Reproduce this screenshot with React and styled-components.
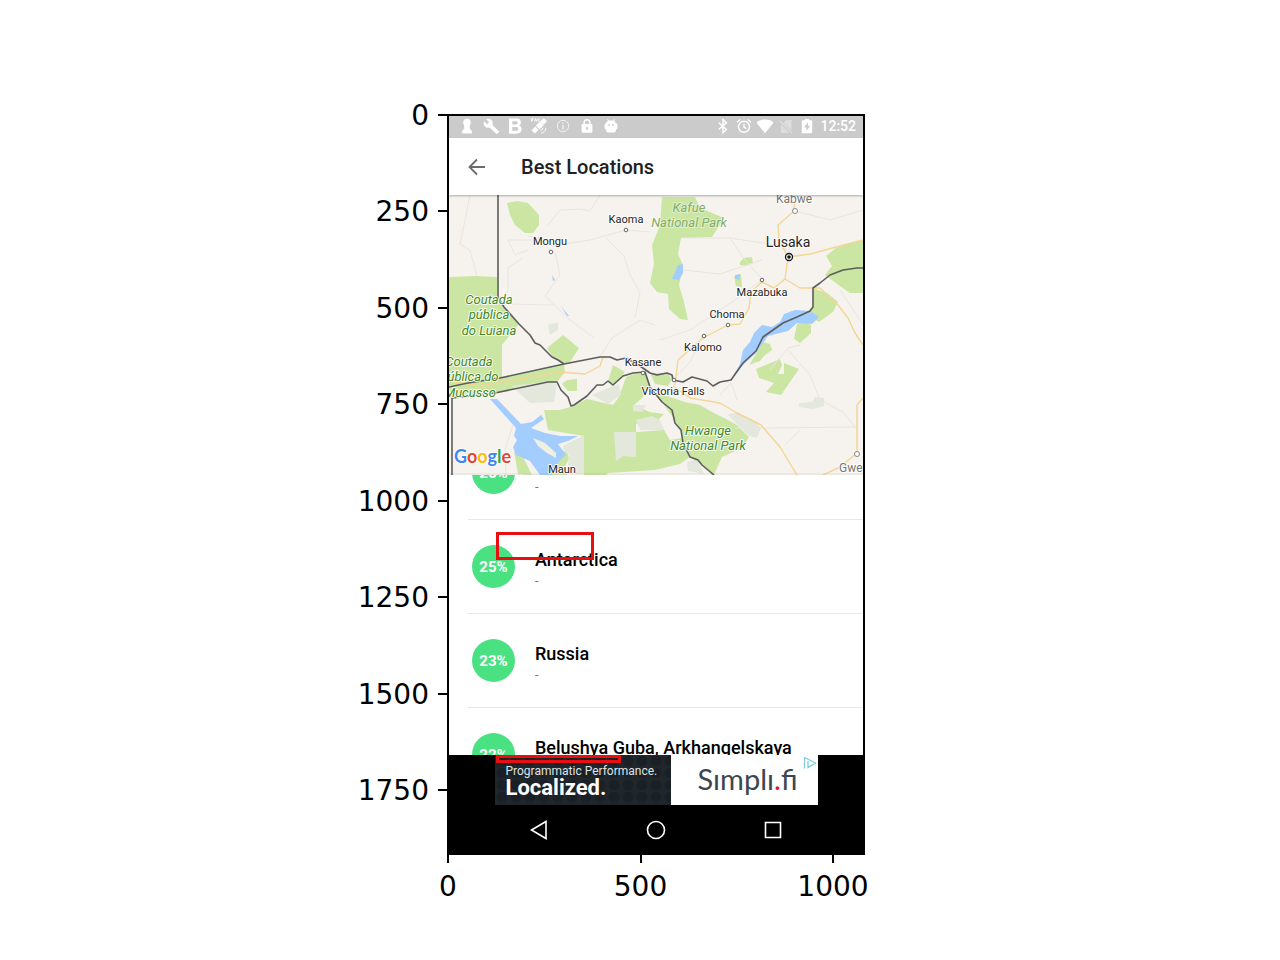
import React from "react";
import styled, { createGlobalStyle } from "styled-components";

const GlobalStyle = createGlobalStyle`
  * { box-sizing: border-box; }
  body { margin: 0; background: #fff; font-family: Roboto, sans-serif; }
  ul { margin: 0; padding: 0; list-style: none; }
  h1, h2, p { margin: 0; }
  svg { display: block; }
`;

/* ---------- chart frame ---------- */
const Figure = styled.main`
  display: grid;
  grid-template-columns: 447fr 418fr 415fr;
  padding: 114px 0 50px;
  font-family: "DejaVu Sans", sans-serif;
`;
const YAxis = styled.div`
  display: flex;
  flex-direction: column;
  justify-content: space-between;
  margin-top: -9px;
  padding-bottom: 55px;
`;
const YTick = styled.div`
  display: flex;
  justify-content: flex-end;
  align-items: flex-start;
  gap: 9px;
  height: 20px;
  font-size: 28px;
  line-height: 22px;
  &::after { content: ""; width: 9px; height: 2px; margin-top: 9px; background: #000; }
`;
const XAxis = styled.div`
  grid-column: 2;
  display: flex;
  justify-content: space-between;
  margin: 0 -5px 0 -36px;
`;
const XTick = styled.div`
  display: flex;
  flex-direction: column;
  align-items: center;
  flex: 0 0 74px;
  gap: 8px;
  font-size: 28px;
  line-height: 32px;
  &::before { content: ""; width: 2px; height: 8px; background: #000; }
`;
const Plot = styled.section`
  position: relative;
  border: 2px solid #000;
  font-family: Roboto, sans-serif;
`;
const Mark = styled.span`
  position: absolute;
  left: 47px;
  top: ${(p) => p.$top}px;
  width: ${(p) => p.$w}px;
  height: ${(p) => p.$h}px;
  border: 3px solid #e90f10;
`;

/* ---------- phone screen ---------- */
const StatusBar = styled.div`
  display: flex;
  justify-content: space-between;
  align-items: center;
  height: 22px;
  padding: 0 7px 2px 10px;
  background: #cbcbcb;
  color: #fff;
`;
const IconRow = styled.div`
  display: flex;
  align-items: center;
  gap: ${(p) => p.$gap}px;
`;
const Clock = styled.time`
  font-size: 14px;
  font-weight: 500;
  line-height: 20px;
`;
const AppBar = styled.header`
  position: relative;
  display: flex;
  align-items: center;
  gap: 32px;
  height: 57px;
  padding-left: 16px;
  background: #fff;
  box-shadow: 0 1px 2px rgba(0, 0, 0, 0.3);
`;
const IconButton = styled.button`
  display: grid;
  place-items: center;
  width: 24px;
  height: 24px;
  padding: 0;
  border: 0;
  background: none;
  color: ${(p) => p.$color};
`;
const Title = styled.h1`
  font-size: 20px;
  font-weight: 500;
  line-height: 26px;
  color: #212121;
`;
const MapSvg = styled.svg`
  width: 100%;
  height: auto;
  background: #f6f3ee;
  font-family: Roboto, sans-serif;
`;
const List = styled.ul`
  height: 280px;
  overflow: hidden;
  background: #fff;
  & > li:first-child { margin-top: -49px; }
`;
const Row = styled.li`
  display: flex;
  align-items: center;
  gap: 20px;
  height: 94px;
  margin-left: 19px;
  padding-left: 4px;
  border-bottom: 1px solid #e8e8e8;
`;
const Badge = styled.span`
  display: grid;
  place-items: center;
  flex: none;
  width: 43px;
  height: 43px;
  border-radius: 50%;
  background: #4ae183;
  color: #fff;
  font-size: 15px;
  font-weight: 700;
`;
const RowText = styled.div`
  display: grid;
  gap: 1px;
  padding-top: 4px;
`;
const Place = styled.h2`
  min-height: 24px;
  font-size: 18px;
  font-weight: 500;
  line-height: 24px;
  color: #000;
  white-space: nowrap;
`;
const Detail = styled.p`
  font-size: 13px;
  line-height: 16px;
  color: #777;
`;
const AdStrip = styled.div`
  display: flex;
  justify-content: center;
  height: 50px;
  background: #000;
`;
const AdLink = styled.a`
  display: flex;
  width: 323px;
  color: inherit;
  text-decoration: none;
`;
const AdCopy = styled.span`
  flex: 0 0 176px;
  padding: 9px 0 0 11px;
  background-color: #1b2227;
  background-image: radial-gradient(circle, #1a2025 55%, #1f272c 60%);
  background-size: 14px 12px;
  color: #fff;
  white-space: nowrap;
`;
const AdSmall = styled.span`
  display: block;
  font: 400 12px/14px Roboto, sans-serif;
  color: #dfe3e5;
`;
const AdLarge = styled.strong`
  display: block;
  font: 700 22px/20px Roboto, sans-serif;
`;
const AdLogo = styled.span`
  position: relative;
  flex: 1;
  padding-left: 27px;
  background: #fff;
  color: #3c474f;
  font: 400 29px/48px Lato, sans-serif;
  white-space: nowrap;
`;
const RedDot = styled.span`
  color: #e0142c;
`;
const AdChoice = styled.svg`
  position: absolute;
  top: 1px;
  right: 1px;
`;
const NavBar = styled.nav`
  display: flex;
  justify-content: center;
  align-items: center;
  gap: 93px;
  height: 48px;
  padding-top: 2px;
  background: #000;
`;

/* ---------- icons ---------- */
const Icon = ({ children, size = 16 }) => (
  <svg width={size} height={size} viewBox="0 0 16 16" fill="currentColor" aria-hidden="true">
    {children}
  </svg>
);
const line = { fill: "none", stroke: "currentColor", strokeWidth: 1.4 };

const leftIcons = [
  <path d="M8 .5a4 4 0 0 1 3 6.500L10.600 10.500 12.800 12.800v2.700H3.200v-2.700l2.200-2.300L5 7A4 4 0 0 1 8 .5z" />,
  <path d="M15.800 13.300 9.400 6.900c.6-1.600.3-3.500-1-4.800C7 .7 4.900.5 3.200 1.200L6.100 4.200 4.200 6.200 1.100 3.200C.3 4.900.6 7 2 8.400c1.300 1.300 3.200 1.600 4.800 1l6.400 6.400c.3.300.7.3 1 0l1.600-1.600c.3-.2.3-.7 0-.9z" />,
  <path fillRule="evenodd" d="M2 .5h7.700c2.900 0 4.200 1.700 4.200 3.900 0 1.500-.7 2.600-2 3.200 1.700.5 2.700 1.900 2.700 3.700 0 2.700-2 4.400-4.900 4.400H2zM5.300 3.200v3.200h3.600c1.200 0 1.800-.6 1.800-1.600s-.6-1.600-1.800-1.600zM5.300 9v3.800h4c1.200 0 1.900-.7 1.900-1.900S10.500 9 9.300 9z" />,
  <g>
    <path d="M9 3.500 12.500 0 16 3.200l-3.500 3.600zM4.700 7.500 9 3.700l3.700 3.800-4.100 4.100zM.5 12.400 4.300 8.500l3.200 3.300L3.800 15.500z" />
    <path d="M.7 3.500V.7h2M.7 2h1.500M3.700 3.500 4.700.7l1 2.800M8.600 1a1.200 1.200 0 1 0 0 2.200M9.500 12.500a4 4 0 0 0 2.500-2.500M10 15.200c2.600-.3 4.600-2.400 5-5" {...line} strokeWidth="1" />
  </g>,
  <g opacity="0.75">
    <circle cx="8" cy="8" r="5.700" {...line} strokeWidth="1" />
    <path d="M7.300 4.500h1.400v1.300H7.300zM7.300 7h1.400v4.500H7.300z" />
  </g>,
  <path fillRule="evenodd" d="M12.500 6h-.9V4.700a3.600 3.600 0 0 0-7.200 0V6h-.9c-.5 0-.9.400-.9.900v6.900c0 .5.400.9.900.9h9c.5 0 .9-.4.900-.9V6.900c0-.5-.4-.9-.9-.9zM8 11.700a1.300 1.300 0 1 1 0-2.600 1.300 1.300 0 0 1 0 2.600zM10.200 6H5.800V4.700a2.200 2.200 0 0 1 4.400 0z" />,
  <path fillRule="evenodd" d="m4.800 1 1.200 1.600h4L11.200 1l.6.500-.7 1.500c1.100.5 1.700 1.400 1.900 2.600.9-.1 1.400.3 1.400 1.200v3.200c0 .9-.5 1.300-1.400 1.200v.5c0 1.700-.8 2.700-2.300 2.700H5.300C3.800 14.400 3 13.400 3 11.700v-.5c-.9.100-1.400-.3-1.400-1.200V6.800c0-.9.500-1.300 1.400-1.200.2-1.200.8-2.100 1.900-2.600l-.7-1.500zM6 6a.9.900 0 1 0 0 1.800A.9.900 0 0 0 6 6zm4 0a.9.900 0 1 0 0 1.800A.9.900 0 0 0 10 6z" />,
];

const rightIcons = [
  <path d="m3.800 4.800 7.600 6.700L8 14.700V1.500l3.400 3.200-7.600 6.700" {...line} />,
  <g {...line}>
    <circle cx="8" cy="8.800" r="5.500" />
    <path d="M8 5.800v3.300l2.400 1.500M1 4.200l3.200-2.700M15 4.200l-3.200-2.700" />
  </g>,
  <path d="M-.8 4.300C4.500.4 11.500.4 16.800 4.300L8 15.300z" />,
  <g opacity="0.35">
    <path d="M13.500 2v10.500L5.500 4.800 8 2zM3 6.500l8.500 8.500H3z" />
    <path d="m1.500 2.500 12.500 12.500" {...line} />
  </g>,
  <path fillRule="evenodd" d="M6 1h4v1.300h2.400c.5 0 .8.300.8.800v11.400c0 .5-.3.800-.8.800H3.600c-.5 0-.8-.3-.8-.8V3.100c0-.5.300-.8.800-.8H6zM9 4.200 5 9.500h2.400v3.800L11 8H9z" />,
];

/* ---------- map ---------- */
const GREEN = "#cbe6a3";
const PALE = "#e4e8dc";
const WATER = "#a3ccff";

const greens = [
  "M507 203 517 201 528 203 539 215 539 225 533 233 525 233 515 225 510 215z",
  "M449 277 476 276 497 277 497 297 504 307 519 324 502 345 502 378 540 369 564 364 565 372 557 382 495 393 449 398z",
  "M547 348 563 335 579 348 570 362 564 364 553 357z",
  "M562 384 567 380 577 379 577 391 568 391z",
  "M544 410 560 410 573 406 587 399 613 405 619 397 626 377 634 374 646 373 650 385 642 398 634 405 650 412 664 414 658 420 636 424 636 432 664 430 670 440 681 438 683 443 690 457 680 464 655 470 608 473 606 475 584 475 584 436 548 430z",
  "M613 365 625 372 618 381 612 386 608 381z",
  "M650 373 667 373 672 379 668 386 655 384z",
  "M652 392 670 397 685 402 700 405 712 412 728 420 737 425 749 437 742 448 722 457 714 475 698 461 690 457 683 443 681 430 675 420 662 402z",
  "M662 197 695 197 700 208 724 218 712 237 681 238 678 254 683 265 679 285 684 302 688 320 680 319 669 309 668 294 657 292 650 283 654 264 652 245 660 225z",
  "M740 262 744 258 752 257 753 263 746 266 740 265z",
  "M734 277 741 274 742 287 736 286z",
  "M826 256 836 248 857 241 863 240 863 293 850 293 840 286 825 275 832 266z",
  "M813 288 827 293 838 302 833 312 819 322 811 317 809 310 813 306z",
  "M797 324 804 321 811 325 811 333 800 343 794 339z",
  "M756 354 763 342 770 344 772 350 764 356 760 361 749 365z",
  "M756 369 780 359 782 365 778 374 784 374 784 363 799 369 790 382 781 395 766 392 774 383 759 378z",
  "M514 451 520 451 532 475 518 474z",
  "M552 475 557 461 560 451 567 451 569 459 564 468 567 475z",
];
const pales = [
  "M512 386 545 382 557 384 554 402 530 403z",
  "M563 446 584 435 584 474 567 474 569 455 564 451z",
  "M614 432 636 432 636 457 623 456 616 461z",
  "M592 395 608 388 619 384 621 395 608 404z",
  "M633 405 646 405 642 412 633 411z",
  "M636 420 652 416 660 420 664 430 640 430z",
  "M727 414 737 413 750 418 761 428 757 438 749 436z",
  "M799 403 812 402 815 397 824 398 824 406 812 409 799 407z",
  "M548 325 558 322 558 330 550 335z",
  "M687 462 697 459 704 474 688 471z",
];
const waters = [
  "M490 399 497 399 521 424 532 422 541 415 544 419 531 428 545 433 560 436 578 436 568 441 558 444 566 455 560 460 552 475 540 475 530 461 516 455 513 447 517 440 514 436 516 428z",
  "M731 380 740 364 743 350 750 342 754 333 762 325 772 327 780 322 784 314 795 310 810 311 819 317 812 324 797 323 788 331 768 336 756 353 742 366z",
  "M672 279 678 265 683 264 683 273 679 280z",
  "M735 275 740 274 739 280 735 278z",
  "M552 275 555 280 553 281z",
  "M561 306 569 316 567 316z",
];
const minorRoads = [
  "M470 195 463 230 460 244 470 250 477 276",
  "M551 252 540 238 528 236M551 246 590 240 626 230 650 232",
  "M606 238 624 256 630 275 640 292 635 318",
  "M555 252 560 275 545 296 570 320 594 338",
  "M552 240 508 240 515 255 528 250M523 258 508 268 508 290 504 304 553 305",
  "M548 225 560 210 580 209 590 211 600 195M683 238 730 238 770 244 788 250",
  "M684 270 720 274 762 260M730 238 745 260 762 279",
  "M762 280 735 300 690 330 660 340",
  "M703 335 690 362 673 380M863 210 830 220 795 211",
  "M788 350 810 375 820 400 843 412 856 428",
  "M735 428 770 428 855 427M785 445 800 430M863 325 840 290",
  "M737 400 731 383 720 395M800 345 788 348 770 370",
  "M513 425 505 450 506 475M600 357 612 338 640 320 655 325",
];
const majorRoads = [
  "M796 195 793 212 778 225 779 240 788 257 785 279 774 288 762 282 751 292 749 308 740 324 728 325 703 338 678 360 675 385",
  "M785 279 800 288 820 288 838 305 848 318 855 333 863 345",
  "M788 257 810 254 840 246 863 240",
  "M449 381 480 386 560 372 585 374 600 366 603 357",
  "M673 386 690 398 720 403 737 413 761 425 780 447 797 475",
  "M863 398 857 405 857 453 840 467 823 475",
];
const borders = [
  "M498 195V297L504 307 519 324 530 335 535 343 540 345 548 353 552 357 558 360 564 364",
  "M449 387 468 383 500 378 564 364 600 357 610 357 617 360 626 358 640 366 650 373 657 375 667 373 672 375 673 380 683 382 692 377 707 381 713 386 720 382 731 380 743 363 756 351 763 337 773 330 783 323 797 317 810 311 813 307 813 288 820 283 830 275 843 270 857 268 863 268",
  "M452 475V398L495 393 548 382 557 382 561 390 568 397 571 406 574 405 587 396 597 385 603 385 608 381 613 385 623 376 633 373 645 372 650 387 662 402 672 410 675 423 681 430 683 443 690 457 698 460 702 465 714 475",
];
const towns = [
  ["Kaoma", 626, 223, 626, 230],
  ["Mongu", 550, 245, 551, 252],
  ["Mazabuka", 762, 296, 762, 280],
  ["Choma", 727, 318, 728, 325],
  ["Kalomo", 703, 351, 704, 336],
  ["Kasane", 643, 366, 643, 373],
  ["Victoria Falls", 673, 395, 674, 380],
  ["Maun", 562, 473, 562, 478],
];
const parks = [
  ["Coutada", 489, 304], ["pública", 489, 319], ["do Luiana", 489, 335],
  ["Coutada", 469, 366], ["ública do", 473, 381], ["Mucusso", 470, 397],
  ["Hwange", 708, 435], ["National Park", 708, 450],
];
const halo = { stroke: "#fff", strokeOpacity: 0.85, strokeWidth: 2, paintOrder: "stroke", strokeLinejoin: "round" };
const shapes = (list, props) => list.map((d) => <path key={d} d={d} {...props} />);

const MapView = () => (
  <MapSvg viewBox="449 195 414 280" role="img" aria-label="Map">
    <g>{shapes(greens, { fill: GREEN })}</g>
    <g>{shapes(pales, { fill: PALE })}</g>
    <g>{shapes(waters, { fill: WATER })}</g>
    <path d="M533 438 545 443 556 453 556 458 547 453 538 446z" fill="#eef0e2" />
    <g fill="none" strokeLinejoin="round">
      {shapes(minorRoads, { stroke: "#ebe3df", strokeWidth: 1 })}
      {shapes(majorRoads, { stroke: "#f3d596", strokeWidth: 1.4 })}
      {shapes(borders, { stroke: "#5d5d5d", strokeWidth: 1.6 })}
    </g>
    <g fontSize="11" textAnchor="middle" fill="#222">
      {towns.map(([name, x, y, cx, cy]) => (
        <g key={name}>
          <circle cx={cx} cy={cy} r="1.800" fill="#fff" stroke="#666" />
          <text x={x} y={y} {...halo}>{name}</text>
        </g>
      ))}
    </g>
    <g fontSize="12" textAnchor="middle" fill="#777">
      <circle cx="795" cy="211" r="2.500" fill="#fff" stroke="#888" />
      <text x="794" y="203" {...halo}>Kabwe</text>
      <circle cx="857" cy="454" r="2.500" fill="#fff" stroke="#888" />
      <text x="839" y="472" textAnchor="start" {...halo}>Gwe</text>
    </g>
    <circle cx="789" cy="257" r="3.500" fill="#fff" stroke="#111" strokeWidth="1.300" />
    <circle cx="789" cy="257" r="1.800" fill="#111" />
    <text x="788" y="247" fontSize="14" textAnchor="middle" fill="#222" {...halo}>Lusaka</text>
    <g fontSize="13" fontStyle="italic" textAnchor="middle">
      {parks.map(([name, x, y]) => (
        <text key={name + y} x={x} y={y} fill="#44881f" {...halo}>{name}</text>
      ))}
      <g fill="#84ae68" stroke="#fff" strokeOpacity="0.4" strokeWidth="2" paintOrder="stroke">
        <text x="689" y="212">Kafue</text>
        <text x="689" y="227">National Park</text>
      </g>
    </g>
    <text x="454" y="463" fontSize="18" fontFamily="Lato, sans-serif" fontWeight="700" {...halo}>
      <tspan fill="#4285f4">G</tspan>
      <tspan fill="#ea4335">o</tspan>
      <tspan fill="#fbbc05">o</tspan>
      <tspan fill="#4285f4">g</tspan>
      <tspan fill="#34a853">l</tspan>
      <tspan fill="#ea4335">e</tspan>
    </text>
    <path d="M449 473h414v2H449z" fill="#000" opacity="0.04" />
  </MapSvg>
);

const places = [
  { score: "26%", name: "" },
  { score: "25%", name: "Antarctica" },
  { score: "23%", name: "Russia" },
  { score: "22%", name: "Belushya Guba, Arkhangelskaya" },
];

export default function App() {
  return (
    <>
      <GlobalStyle />
      <Figure>
        <YAxis>
          {[0, 250, 500, 750, 1000, 1250, 1500, 1750].map((n) => <YTick key={n}>{n}</YTick>)}
        </YAxis>
        <Plot>
          <StatusBar>
            <IconRow $gap={8}>{leftIcons.map((shape, i) => <Icon key={i}>{shape}</Icon>)}</IconRow>
            <IconRow $gap={5}>
              {rightIcons.map((shape, i) => <Icon key={i}>{shape}</Icon>)}
              <Clock>12:52</Clock>
            </IconRow>
          </StatusBar>
          <AppBar>
            <IconButton $color="#6b6b6b" aria-label="Back">
              <svg width="18" height="18" viewBox="0 0 18 18" fill="none" stroke="currentColor" strokeWidth="1.800">
                <path d="M17 9H2M9 1.500 1.500 9 9 16.500" />
              </svg>
            </IconButton>
            <Title>Best Locations</Title>
          </AppBar>
          <MapView />
          <List>
            {places.map((p) => (
              <Row key={p.score}>
                <Badge>{p.score}</Badge>
                <RowText>
                  <Place>{p.name}</Place>
                  <Detail>-</Detail>
                </RowText>
              </Row>
            ))}
          </List>
          <AdStrip>
            <AdLink href="#">
              <AdCopy>
                <AdSmall>Programmatic Performance.</AdSmall>
                <AdLarge>Localized.</AdLarge>
              </AdCopy>
              <AdLogo>
                Sımplı<RedDot>.</RedDot>fi
                <AdChoice width="14" height="14" viewBox="0 0 14 14" fill="none" stroke="#7fcbdc" strokeWidth="1.300">
                  <path d="M1.500 12.500V1.500L12.500 7 5 11.500V5" />
                </AdChoice>
              </AdLogo>
            </AdLink>
          </AdStrip>
          <NavBar>
            <IconButton $color="#fff" aria-label="Back">
              <svg width="20" height="20" viewBox="0 0 20 20" fill="none" stroke="currentColor" strokeWidth="1.600">
                <path d="M17 1.500v17L2.500 10z" />
              </svg>
            </IconButton>
            <IconButton $color="#fff" aria-label="Home">
              <svg width="20" height="20" viewBox="0 0 20 20" fill="none" stroke="currentColor" strokeWidth="1.600">
                <circle cx="10" cy="10" r="8.500" />
              </svg>
            </IconButton>
            <IconButton $color="#fff" aria-label="Recent apps">
              <svg width="20" height="20" viewBox="0 0 20 20" fill="none" stroke="currentColor" strokeWidth="1.600">
                <path d="M2.500 2.500h15v15h-15z" />
              </svg>
            </IconButton>
          </NavBar>
          <Mark $top={416} $w={98} $h={28} />
          <Mark $top={639} $w={125} $h={8} />
        </Plot>
        <XAxis>
          {[0, 500, 1000].map((n) => <XTick key={n}>{n}</XTick>)}
        </XAxis>
      </Figure>
    </>
  );
}
